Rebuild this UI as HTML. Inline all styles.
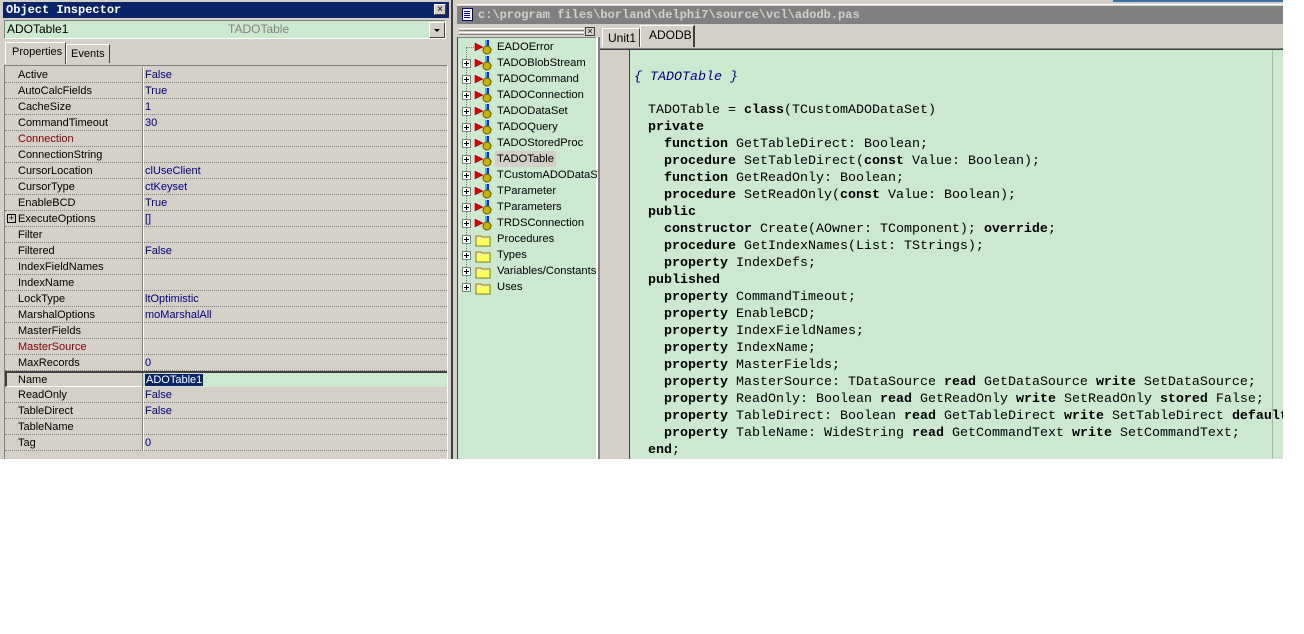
<!DOCTYPE html>
<html><head><meta charset="utf-8"><style>
*{margin:0;padding:0;box-sizing:border-box}
body{width:1304px;height:634px;background:#fff;position:relative;overflow:hidden;font-family:"Liberation Sans",sans-serif;font-size:11px}
.a{position:absolute}
.row{position:absolute;left:5px;width:442px;height:16px;border-bottom:1px dotted #808080;}
.row .n{position:absolute;left:13px;top:2px;color:#000;white-space:nowrap}
.row .v{position:absolute;left:140px;top:2px;color:#000080;white-space:nowrap}
.row .d{position:absolute;left:137px;top:0;width:1px;height:16px;background:#808080}
.row .d2{position:absolute;left:138px;top:0;width:1px;height:16px;background:#fff}
.t{position:absolute;left:462px;height:16px;width:135px;white-space:nowrap;overflow:hidden;font-size:11.2px}
.t .pl{position:absolute;left:0;top:4px;width:9px;height:9px;border:1px solid #808080;background:#fff}
.t .pl:before{content:"";position:absolute;left:1px;top:3px;width:5px;height:1px;background:#000}
.t .pl:after{content:"";position:absolute;left:3px;top:1px;width:1px;height:5px;background:#000}
.t .tx{position:absolute;left:35px;top:2px}
.code{position:absolute;left:648px;font-family:"Liberation Mono",monospace;font-size:13.33px;color:#000;white-space:pre;line-height:17px}
.code b{font-weight:bold}
</style></head><body>
<div class="a" style="left:0;top:0;width:452px;height:459px;background:#d4d0c8"></div>
<div class="a" style="left:3px;top:2px;width:446px;height:16px;background:#0a246a"></div>
<div class="a" style="left:6px;top:2px;color:#fff;font-family:'Liberation Mono',monospace;font-weight:bold;font-size:12px;line-height:16px">Object Inspector</div>
<div class="a" style="left:434px;top:4px;width:12px;height:11px;background:#d4d0c8;border:1px solid #fff;border-right-color:#404040;border-bottom-color:#404040;font-size:10px;line-height:9px;text-align:center">×</div>
<div class="a" style="left:4px;top:20px;width:442px;height:19px;background:#cce8cf;border:1px solid #808080;border-right-color:#fff;border-bottom-color:#fff"></div>
<div class="a" style="left:7px;top:22px;font-size:12px">ADOTable1</div>
<div class="a" style="left:228px;top:22px;color:#808080;font-size:12px">TADOTable</div>
<div class="a" style="left:429px;top:22px;width:16px;height:16px;background:#d4d0c8;border:1px solid #fff;border-right-color:#404040;border-bottom-color:#404040"></div>
<div class="a" style="left:434px;top:29px;border-left:3px solid transparent;border-right:3px solid transparent;border-top:3px solid #000"></div>
<div class="a" style="left:5px;top:42px;width:61px;height:22px;border:1px solid #fff;border-bottom:none;border-right-color:#404040;background:#d4d0c8"></div>
<div class="a" style="left:12px;top:46px">Properties</div>
<div class="a" style="left:66px;top:44px;width:44px;height:19px;border:1px solid #fff;border-bottom:none;border-right-color:#404040"></div>
<div class="a" style="left:71px;top:48px">Events</div>
<div class="a" style="left:4px;top:65px;width:444px;height:394px;border-top:1px solid #808080;border-left:1px solid #808080"></div>
<div class="a" style="left:447px;top:65px;width:1px;height:394px;background:#fff"></div>

<div class="row" style="top:67px"><span class="n">Active</span><span class="d"></span><span class="d2"></span><span class="v">False</span></div>
<div class="row" style="top:83px"><span class="n">AutoCalcFields</span><span class="d"></span><span class="d2"></span><span class="v">True</span></div>
<div class="row" style="top:99px"><span class="n">CacheSize</span><span class="d"></span><span class="d2"></span><span class="v">1</span></div>
<div class="row" style="top:115px"><span class="n">CommandTimeout</span><span class="d"></span><span class="d2"></span><span class="v">30</span></div>
<div class="row" style="top:131px"><span class="n" style="color:#800000">Connection</span><span class="d"></span><span class="d2"></span></div>
<div class="row" style="top:147px"><span class="n">ConnectionString</span><span class="d"></span><span class="d2"></span></div>
<div class="row" style="top:163px"><span class="n">CursorLocation</span><span class="d"></span><span class="d2"></span><span class="v">clUseClient</span></div>
<div class="row" style="top:179px"><span class="n">CursorType</span><span class="d"></span><span class="d2"></span><span class="v">ctKeyset</span></div>
<div class="row" style="top:195px"><span class="n">EnableBCD</span><span class="d"></span><span class="d2"></span><span class="v">True</span></div>
<div class="row" style="top:211px"><span class="a" style="left:2px;top:3px;width:9px;height:9px;border:1px solid #000;font-size:9px;line-height:7px;text-align:center">+</span><span class="n">ExecuteOptions</span><span class="d"></span><span class="d2"></span><span class="v">[]</span></div>
<div class="row" style="top:227px"><span class="n">Filter</span><span class="d"></span><span class="d2"></span></div>
<div class="row" style="top:243px"><span class="n">Filtered</span><span class="d"></span><span class="d2"></span><span class="v">False</span></div>
<div class="row" style="top:259px"><span class="n">IndexFieldNames</span><span class="d"></span><span class="d2"></span></div>
<div class="row" style="top:275px"><span class="n">IndexName</span><span class="d"></span><span class="d2"></span></div>
<div class="row" style="top:291px"><span class="n">LockType</span><span class="d"></span><span class="d2"></span><span class="v">ltOptimistic</span></div>
<div class="row" style="top:307px"><span class="n">MarshalOptions</span><span class="d"></span><span class="d2"></span><span class="v">moMarshalAll</span></div>
<div class="row" style="top:323px"><span class="n">MasterFields</span><span class="d"></span><span class="d2"></span></div>
<div class="row" style="top:339px"><span class="n" style="color:#800000">MasterSource</span><span class="d"></span><span class="d2"></span></div>
<div class="row" style="top:355px"><span class="n">MaxRecords</span><span class="d"></span><span class="d2"></span><span class="v">0</span></div>
<div class="row" style="top:371px;border:none;border-top:2px solid #404040;border-left:2px solid #404040;border-bottom:1px solid #fff"><span class="n" style="left:11px;top:1px">Name</span><span class="d" style="left:135px"></span><span class="a" style="left:136px;top:0;width:304px;height:14px;background:#cce8cf"></span><span class="a" style="left:138px;top:1px;background:#0a246a;color:#fff;padding:0 1px">ADOTable1</span></div>
<div class="row" style="top:387px"><span class="n">ReadOnly</span><span class="d"></span><span class="d2"></span><span class="v">False</span></div>
<div class="row" style="top:403px"><span class="n">TableDirect</span><span class="d"></span><span class="d2"></span><span class="v">False</span></div>
<div class="row" style="top:419px"><span class="n">TableName</span><span class="d"></span><span class="d2"></span></div>
<div class="row" style="top:435px"><span class="n">Tag</span><span class="d"></span><span class="d2"></span><span class="v">0</span></div>

<div class="a" style="left:451px;top:0;width:2px;height:459px;background:#404040"></div>
<div class="a" style="left:453px;top:0;width:4px;height:459px;background:#d4d0c8"></div>
<div class="a" style="left:457px;top:0;width:826px;height:459px;background:#d4d0c8"></div>
<div class="a" style="left:1113px;top:0;width:170px;height:2px;background:#3a6ea5"></div>
<div class="a" style="left:457px;top:4px;width:826px;height:1px;background:#fff"></div>
<div class="a" style="left:457px;top:6px;width:826px;height:18px;background:#808080"></div>
<div class="a" style="left:462px;top:8px;width:11px;height:13px;background:#fff;border:1px solid #000080"></div>
<div class="a" style="left:464px;top:11px;width:6px;height:1px;background:#000080;box-shadow:0 2px #000080,0 4px #000080,0 6px #000080"></div>
<div class="a" style="left:478px;top:8px;color:#d4d0c8;font-family:'Liberation Mono',monospace;font-weight:bold;font-size:12px;line-height:15px">c:\program files\borland\delphi7\source\vcl\adodb.pas</div>
<div class="a" style="left:459px;top:28px;width:125px;height:3px;border-top:1px solid #fff;border-bottom:1px solid #808080"></div>
<div class="a" style="left:459px;top:32px;width:125px;height:3px;border-top:1px solid #fff;border-bottom:1px solid #808080"></div>
<div class="a" style="left:585px;top:27px;width:10px;height:9px;border:1px solid #404040;background:#d4d0c8;font-size:9px;line-height:7px;text-align:center">×</div>
<div class="a" style="left:457px;top:37px;width:140px;height:422px;background:#cce8cf;border-top:1px solid #808080;border-left:1px solid #404040"></div>
<div class="a" style="left:596px;top:37px;width:1px;height:422px;background:#fff"></div>
<div class="a" style="left:466px;top:47px;width:0;height:240px;border-left:1px dotted #808080"></div>
<div class="a" style="left:466px;top:47px;width:10px;height:0;border-top:1px dotted #808080"></div>

<div class="t" style="top:39px"><span class="tx">EADOError</span></div>
<div class="t" style="top:55px"><span class="pl"></span><span class="tx">TADOBlobStream</span></div>
<div class="t" style="top:71px"><span class="pl"></span><span class="tx">TADOCommand</span></div>
<div class="t" style="top:87px"><span class="pl"></span><span class="tx">TADOConnection</span></div>
<div class="t" style="top:103px"><span class="pl"></span><span class="tx">TADODataSet</span></div>
<div class="t" style="top:119px"><span class="pl"></span><span class="tx">TADOQuery</span></div>
<div class="t" style="top:135px"><span class="pl"></span><span class="tx">TADOStoredProc</span></div>
<div class="t" style="top:151px"><span class="pl"></span><span class="a" style="left:33px;top:0;width:61px;height:16px;background:#d4d0c8"></span><span class="tx">TADOTable</span></div>
<div class="t" style="top:167px"><span class="pl"></span><span class="tx">TCustomADODataSet</span></div>
<div class="t" style="top:183px"><span class="pl"></span><span class="tx">TParameter</span></div>
<div class="t" style="top:199px"><span class="pl"></span><span class="tx">TParameters</span></div>
<div class="t" style="top:215px"><span class="pl"></span><span class="tx">TRDSConnection</span></div>
<div class="t" style="top:231px"><span class="pl"></span><span class="tx">Procedures</span></div>
<div class="t" style="top:247px"><span class="pl"></span><span class="tx">Types</span></div>
<div class="t" style="top:263px"><span class="pl"></span><span class="tx">Variables/Constants</span></div>
<div class="t" style="top:279px"><span class="pl"></span><span class="tx">Uses</span></div>
<svg class="a" style="left:474px;top:39px" width="20" height="256">
<defs><g id="ci"><path d="M1 4 L9 8 L1 12Z" fill="#e00000" stroke="#800000" stroke-width="0.5"/><rect x="11" y="1" width="4" height="6" fill="#0030e0"/><rect x="11" y="1" width="2" height="6" fill="#60a0ff"/><circle cx="13" cy="11" r="4" fill="#c8b400" stroke="#605000"/></g>
<g id="fo"><path d="M2 5 h5 l1 1 h8 v9 h-14z" fill="#fff0a0" stroke="#808000"/><rect x="3" y="8" width="12" height="6" fill="#ffff60"/></g></defs>
<use href="#ci" y="0"/><use href="#ci" y="16"/><use href="#ci" y="32"/><use href="#ci" y="48"/><use href="#ci" y="64"/><use href="#ci" y="80"/><use href="#ci" y="96"/><use href="#ci" y="112"/><use href="#ci" y="128"/><use href="#ci" y="144"/><use href="#ci" y="160"/><use href="#ci" y="176"/>
<use href="#fo" y="192"/><use href="#fo" y="208"/><use href="#fo" y="224"/><use href="#fo" y="240"/>
</svg>
<div class="a" style="left:597px;top:37px;width:3px;height:422px;background:#808080;border-left:1px solid #fff"></div>
<div class="a" style="left:602px;top:28px;width:38px;height:19px;border:1px solid #fff;border-bottom:none;border-right-color:#404040"></div>
<div class="a" style="left:608px;top:31px;font-size:12px">Unit1</div>
<div class="a" style="left:640px;top:25px;width:55px;height:22px;border:1px solid #fff;border-bottom:none;border-right:2px solid #404040;background:#d4d0c8"></div>
<div class="a" style="left:649px;top:28px;font-size:12px">ADODB</div>
<div class="a" style="left:600px;top:48px;width:683px;height:2px;border-top:1px solid #808080;border-bottom:1px solid #404040"></div>
<div class="a" style="left:600px;top:50px;width:29px;height:409px;background:#d4d0c8"></div>
<div class="a" style="left:629px;top:50px;width:1px;height:409px;background:#404040"></div>
<div class="a" style="left:630px;top:50px;width:653px;height:409px;background:#cce8cf"></div>
<div class="a" style="left:1272px;top:50px;width:1px;height:409px;background:#b0b0b0"></div>
<div class="a" style="left:634px;top:70px;font-family:'Liberation Mono',monospace;font-size:13.33px;font-style:italic;color:#000080;white-space:pre">{ TADOTable }</div>
<div class="code" style="top:102px;width:635px;overflow:hidden">TADOTable = <b>class</b>(TCustomADODataSet)
<b>private</b>
  <b>function</b> GetTableDirect: Boolean;
  <b>procedure</b> SetTableDirect(<b>const</b> Value: Boolean);
  <b>function</b> GetReadOnly: Boolean;
  <b>procedure</b> SetReadOnly(<b>const</b> Value: Boolean);
<b>public</b>
  <b>constructor</b> Create(AOwner: TComponent); <b>override</b>;
  <b>procedure</b> GetIndexNames(List: TStrings);
  <b>property</b> IndexDefs;
<b>published</b>
  <b>property</b> CommandTimeout;
  <b>property</b> EnableBCD;
  <b>property</b> IndexFieldNames;
  <b>property</b> IndexName;
  <b>property</b> MasterFields;
  <b>property</b> MasterSource: TDataSource <b>read</b> GetDataSource <b>write</b> SetDataSource;
  <b>property</b> ReadOnly: Boolean <b>read</b> GetReadOnly <b>write</b> SetReadOnly <b>stored</b> False;
  <b>property</b> TableDirect: Boolean <b>read</b> GetTableDirect <b>write</b> SetTableDirect <b>default</b> False;
  <b>property</b> TableName: WideString <b>read</b> GetCommandText <b>write</b> SetCommandText;
<b>end</b>;</div>
<div class="a" style="left:630px;top:459px;width:660px;height:175px;background:#fff"></div>
</body></html>
